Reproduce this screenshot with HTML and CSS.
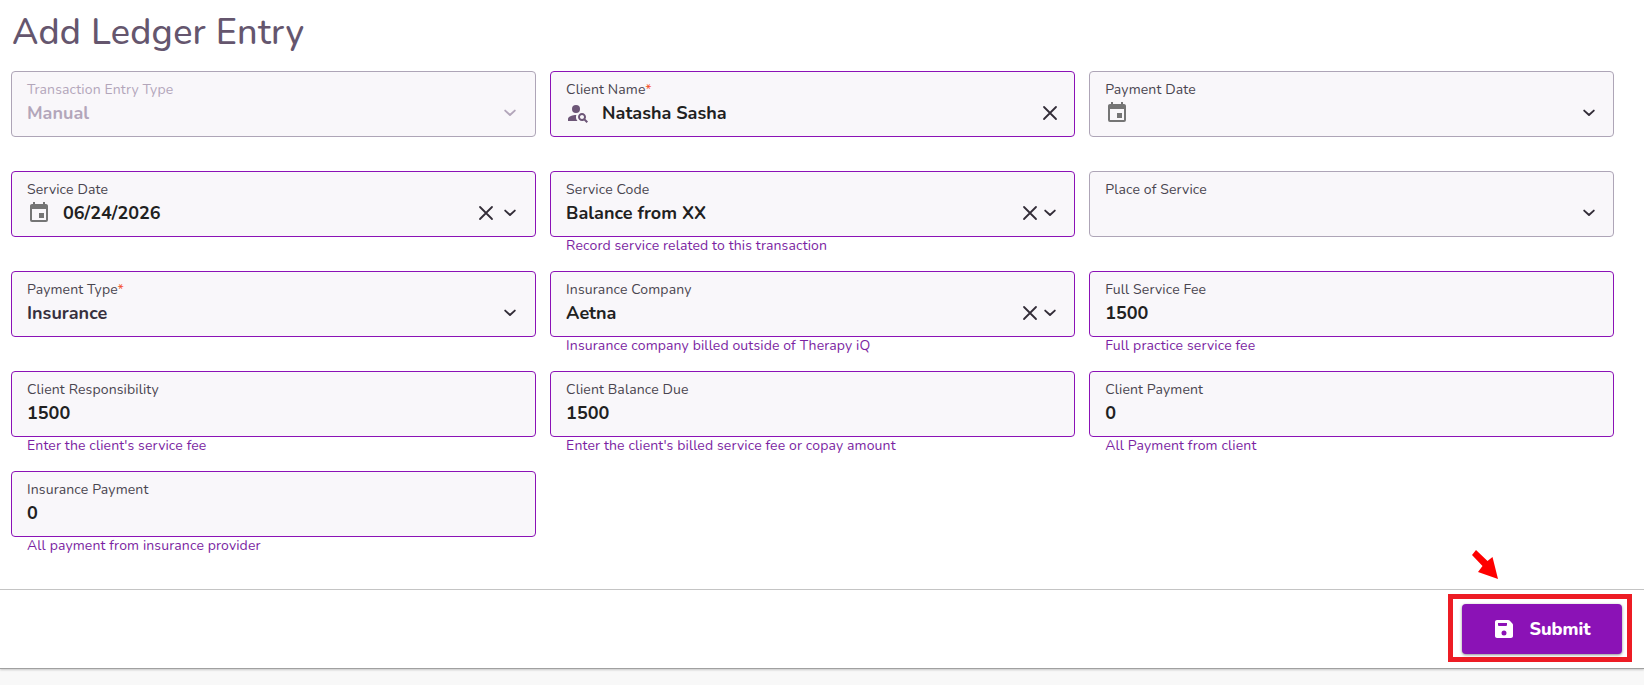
FILE: index.html
```html
<!DOCTYPE html>
<html lang="en">
<head>
  <meta charset="UTF-8" />
  <title>Add Ledger Entry</title>
  <link rel="stylesheet" href="styles.css">
</head>
<body>
  <svg class="sprite">
    <symbol id="chevron" viewBox="0 0 20 20"><path d="M5.2 7.6 10 12l4.8-4.4" fill="none" stroke="currentColor" stroke-width="1.9" stroke-linecap="round" stroke-linejoin="round"/></symbol>
    <symbol id="clear" viewBox="0 0 20 20"><path d="M4 4l12 12M16 4L4 16" fill="none" stroke="currentColor" stroke-width="1.8" stroke-linecap="round"/></symbol>
    <symbol id="calendar" viewBox="0 0 24 24"><path fill="currentColor" d="M19 19H5V8h14M16 1v2H8V1H6v2H5c-1.11 0-2 .89-2 2v14a2 2 0 0 0 2 2h14a2 2 0 0 0 2-2V5c0-1.11-.9-2-2-2h-1V1M17 12h-5v5h5v-5z"/></symbol>
    <symbol id="person" viewBox="0 0 24 24"><g fill="currentColor"><circle cx="10" cy="8" r="4"/><path d="M10.35 14.01C7.62 13.91 2 15.27 2 18v2h9.54c-2.47-2.76-1.23-5.89-1.19-5.99zM19.43 18.02c.36-.59.57-1.28.57-2.02 0-2.21-1.79-4-4-4s-4 1.79-4 4 1.79 4 4 4c.74 0 1.43-.22 2.02-.57L20.59 22 22 20.59l-2.57-2.57zM16 18c-1.1 0-2-.9-2-2s.9-2 2-2 2 .9 2 2-.9 2-2 2z"/></g></symbol>
  </svg>

  <main class="page">
    <h1 class="title">Add Ledger Entry</h1>
    <div class="form-grid">
      <div class="field disabled">
        <div class="box">
          <div class="label">Transaction Entry Type</div>
          <div class="row"><span class="value">Manual</span><svg class="ctl"><use href="#chevron"/></svg></div>
        </div>
      </div>
      <div class="field filled">
        <div class="box">
          <div class="label">Client Name<span class="req">*</span></div>
          <div class="row"><svg class="icon person"><use href="#person"/></svg><span class="value">Natasha Sasha</span><svg class="ctl"><use href="#clear"/></svg></div>
        </div>
      </div>
      <div class="field">
        <div class="box">
          <div class="label">Payment Date</div>
          <div class="row"><svg class="icon"><use href="#calendar"/></svg><span class="value"></span><svg class="ctl"><use href="#chevron"/></svg></div>
        </div>
      </div>

      <div class="field filled">
        <div class="box">
          <div class="label">Service Date</div>
          <div class="row"><svg class="icon"><use href="#calendar"/></svg><span class="value">06/24/2026</span><svg class="ctl spaced"><use href="#clear"/></svg><svg class="ctl"><use href="#chevron"/></svg></div>
        </div>
      </div>
      <div class="field filled">
        <div class="box">
          <div class="label">Service Code</div>
          <div class="row"><span class="value">Balance from XX</span><svg class="ctl"><use href="#clear"/></svg><svg class="ctl"><use href="#chevron"/></svg></div>
        </div>
        <div class="hint">Record service related to this transaction</div>
      </div>
      <div class="field">
        <div class="box">
          <div class="label">Place of Service</div>
          <div class="row"><span class="value"></span><svg class="ctl"><use href="#chevron"/></svg></div>
        </div>
      </div>

      <div class="field filled">
        <div class="box">
          <div class="label">Payment Type<span class="req">*</span></div>
          <div class="row"><span class="value soft">Insurance</span><svg class="ctl"><use href="#chevron"/></svg></div>
        </div>
      </div>
      <div class="field filled">
        <div class="box">
          <div class="label">Insurance Company</div>
          <div class="row"><span class="value">Aetna</span><svg class="ctl"><use href="#clear"/></svg><svg class="ctl"><use href="#chevron"/></svg></div>
        </div>
        <div class="hint">Insurance company billed outside of Therapy iQ</div>
      </div>
      <div class="field filled">
        <div class="box">
          <div class="label">Full Service Fee</div>
          <div class="row"><span class="value">1500</span></div>
        </div>
        <div class="hint">Full practice service fee</div>
      </div>

      <div class="field filled">
        <div class="box">
          <div class="label">Client Responsibility</div>
          <div class="row"><span class="value">1500</span></div>
        </div>
        <div class="hint">Enter the client's service fee</div>
      </div>
      <div class="field filled">
        <div class="box">
          <div class="label">Client Balance Due</div>
          <div class="row"><span class="value">1500</span></div>
        </div>
        <div class="hint">Enter the client's billed service fee or copay amount</div>
      </div>
      <div class="field filled">
        <div class="box">
          <div class="label">Client Payment</div>
          <div class="row"><span class="value">0</span></div>
        </div>
        <div class="hint">All Payment from client</div>
      </div>

      <div class="field filled">
        <div class="box">
          <div class="label">Insurance Payment</div>
          <div class="row"><span class="value">0</span></div>
        </div>
        <div class="hint">All payment from insurance provider</div>
      </div>
    </div>

    <footer class="actions">
      <div class="highlight">
        <svg class="arrow" viewBox="0 0 30 32"><path fill="#fe0000" d="M6 2 17.500 13 22.500 9 28 31 8 24 12.500 18 2 7z"/></svg>
        <button class="submit">
          <svg class="save" viewBox="0 0 24 24"><path fill="currentColor" d="M16.2 3H5c-1.1 0-2 .9-2 2v14c0 1.1.9 2 2 2h14c1.1 0 2-.9 2-2V7.800c0-.5-.2-1-.6-1.400l-2.800-2.800c-.4-.4-.9-.6-1.400-.6zM12 18.500a2.500 2.500 0 1 1 0-5 2.500 2.500 0 0 1 0 5zM14 9H7a1 1 0 0 1-1-1V6h9v2a1 1 0 0 1-1 1z"/></svg>
          <span>Submit</span>
        </button>
      </div>
    </footer>
  </main>
</body>
</html>
```
FILE: styles.css
```css
* {
  box-sizing: border-box;
}
body {
  margin: 0;
  height: 685px;
  overflow: hidden;
  background: #f8f8f8;
  font-family: Nunito, Lato, "Open Sans", sans-serif;
}
.sprite {
  display: none;
}
.page {
  height: 669px;
  background: #fff;
  border-bottom: 1px solid #a0a0a0;
  box-shadow: 0 1px 2px rgba(0, 0, 0, 0.2);
  display: flex;
  flex-direction: column;
}
.title {
  margin: 0;
  padding: 9px 0 0 12px;
  height: 71px;
  font-size: 36px;
  font-weight: 500;
  line-height: 48px;
  letter-spacing: 0.00735em;
  color: #65566e;
}
.form-grid {
  display: grid;
  grid-template-columns: repeat(3, 525.1px);
  grid-auto-rows: 100px;
  column-gap: 14px;
  padding-left: 11px;
  height: 518px;
}
.box {
  height: 66px;
  padding: 8px 14.7px 8px 15px;
  background: #f9f7fa;
  border: 1px solid #aea5b7;
  border-radius: 4px;
}
.filled .box {
  border-color: #8b12b6;
}
.label {
  font-size: 14px;
  line-height: 19px;
  letter-spacing: 0.00937em;
  color: #49454f;
}
.req {
  color: #f4512c;
}
.row {
  display: flex;
  align-items: center;
  height: 28px;
}
.value {
  flex: 1;
  font-size: 18px;
  font-weight: 700;
  color: #212121;
}
.soft {
  color: #37303e;
}
.disabled .label,
.disabled .value,
.disabled .ctl {
  color: #b3a6ba;
}
.icon {
  width: 24px;
  height: 24px;
  margin-right: 12px;
  color: #757575;
}
.person {
  color: #6d5677;
}
.ctl {
  width: 20px;
  height: 20px;
  color: #332d38;
}
.spaced {
  margin-right: 4px;
}
.hint {
  padding-left: 16px;
  font-size: 14px;
  line-height: 18px;
  letter-spacing: 0.00937em;
  color: #7b1fa2;
}
.actions {
  flex: 1;
  display: flex;
  justify-content: flex-end;
  align-items: flex-start;
  padding: 4px 12px 0 0;
  border-top: 1px solid #c4c4c4;
}
.highlight {
  position: relative;
  width: 184px;
  height: 68px;
  padding: 5px;
  border: 5px solid #ed1c24;
}
.arrow {
  position: absolute;
  left: 17px;
  top: -51px;
  width: 30px;
  height: 32px;
}
.submit {
  display: flex;
  align-items: center;
  justify-content: center;
  gap: 13px;
  width: 160px;
  height: 50px;
  margin-left: 4px;
  padding: 0 7px 0 6px;
  border: 0;
  border-radius: 4px;
  background: #8b12b6;
  color: #fff;
  box-shadow: 0 1px 3px rgba(0, 0, 0, 0.45);
  font-family: inherit;
  font-size: 18px;
  font-weight: 800;
}
.save {
  width: 24px;
  height: 24px;
}
```
